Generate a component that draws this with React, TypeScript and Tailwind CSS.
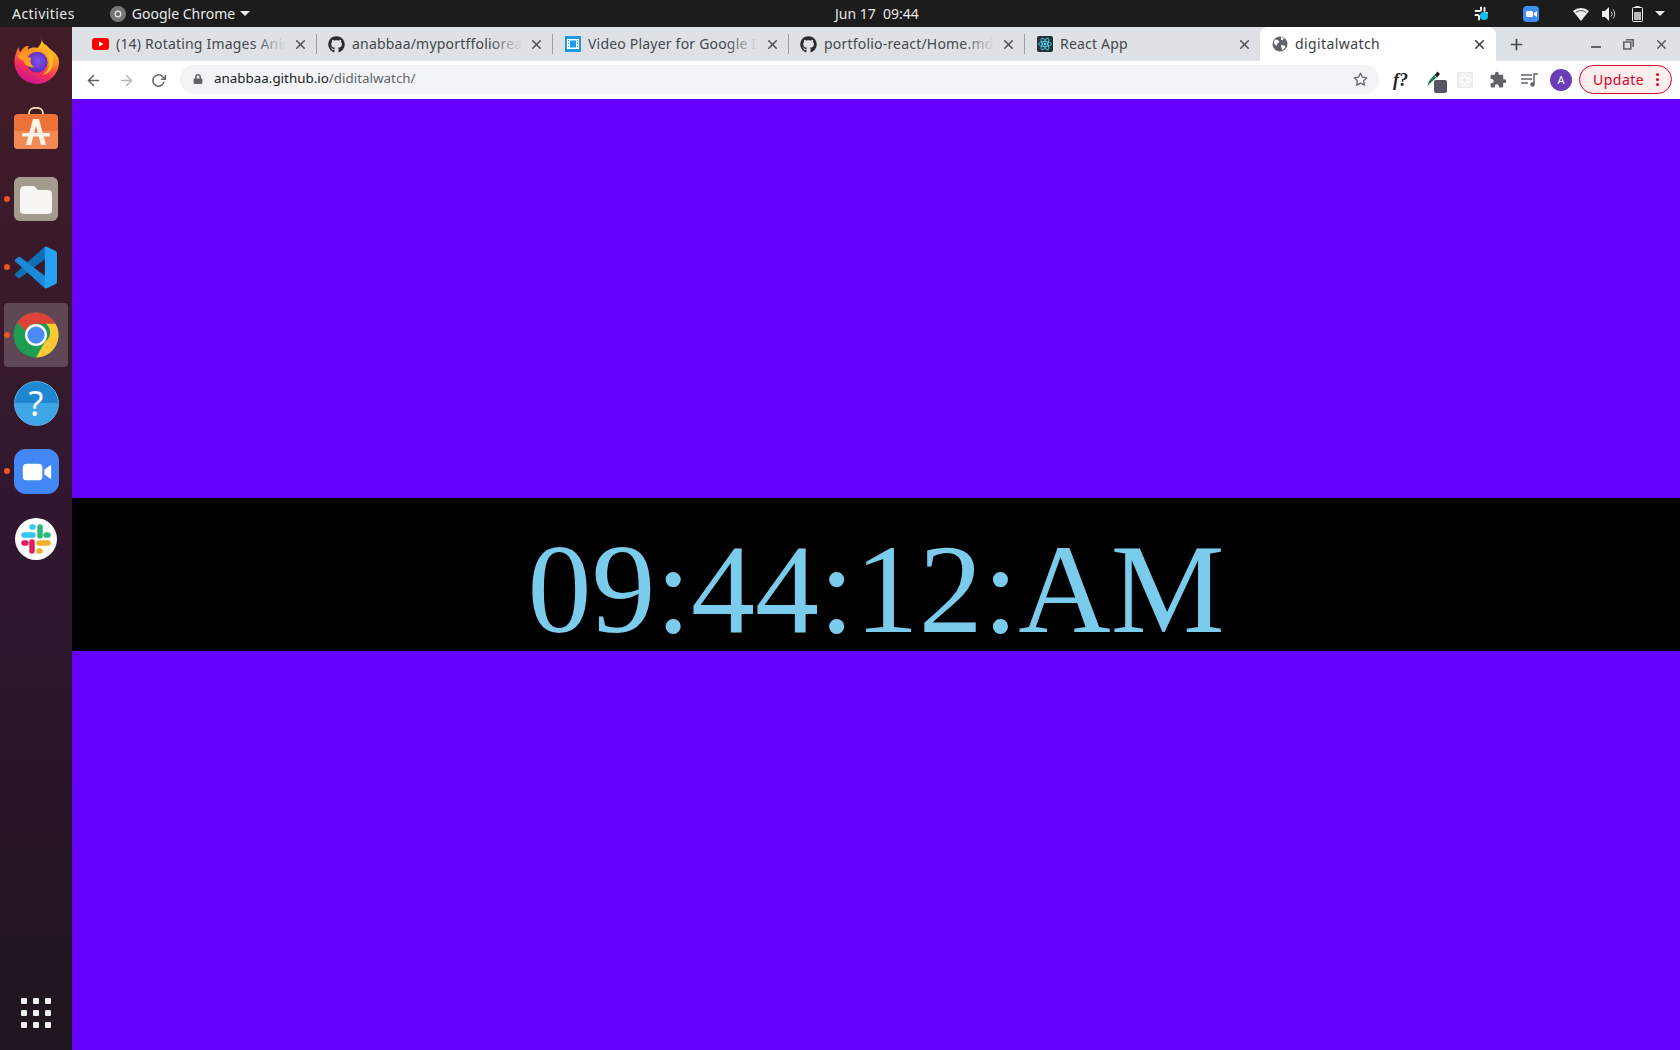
import { FunctionComponent, ReactNode } from "react";
import { FaGithub, FaLock } from "react-icons/fa";
import { MdExtension } from "react-icons/md";
import { FiArrowLeft, FiArrowRight, FiRotateCw, FiStar, FiX, FiPlus } from "react-icons/fi";

const sans = "font-['Noto_Sans',sans-serif]";

const YoutubeIcon = () => (
  <svg width="17" height="12" viewBox="0 0 17 12">
    <rect width="17" height="12" rx="3" fill="#f00" />
    <path d="M7 3.3v5.4L11.4 6z" fill="#fff" />
  </svg>
);

const VideoIcon = () => (
  <svg width="16" height="16" viewBox="0 0 16 16">
    <rect width="16" height="16" fill="#1e9be8" />
    <rect x="2" y="3" width="12" height="10" fill="#fff" />
    <rect x="5" y="4.5" width="6" height="7" fill="#1e9be8" />
    <path d="M3 4h1v1H3zM3 7h1v1H3zM3 10h1v1H3zM12 4h1v1h-1zM12 7h1v1h-1zM12 10h1v1h-1z" fill="#1e9be8" />
  </svg>
);

const ReactFavicon = () => (
  <svg width="16" height="16" viewBox="0 0 16 16">
    <rect width="16" height="16" rx="2" fill="#20323a" />
    <g fill="none" stroke="#61dafb" strokeWidth="0.8">
      <ellipse cx="8" cy="8" rx="6.5" ry="2.5" />
      <ellipse cx="8" cy="8" rx="6.5" ry="2.5" transform="rotate(60 8 8)" />
      <ellipse cx="8" cy="8" rx="6.5" ry="2.5" transform="rotate(120 8 8)" />
    </g>
    <circle cx="8" cy="8" r="1.3" fill="#61dafb" />
  </svg>
);

const GlobeIcon = () => (
  <svg width="16" height="16" viewBox="0 0 16 16">
    <circle cx="8" cy="8" r="7.5" fill="#5f6368" />
    <path d="M3 3.5l3 .5 1.5 2-2 1.500-1 2.500-3-3zM9 1l3 1-1.500 2.500L9 3.500zM9 9l3.500.5 1 1.500-3 3.500-1-2.500z" fill="#fff" />
  </svg>
);

const tabs: { icon: ReactNode; title: string }[] = [
  { icon: <YoutubeIcon />, title: "(14) Rotating Images Animation" },
  { icon: <FaGithub size={17} className="text-[#2b2d30]" />, title: "anabbaa/myportffolioreact" },
  { icon: <VideoIcon />, title: "Video Player for Google Drive" },
  { icon: <FaGithub size={17} className="text-[#2b2d30]" />, title: "portfolio-react/Home.md at" },
  { icon: <ReactFavicon />, title: "React App" },
];

const Tab: FunctionComponent<{ icon: ReactNode; title: string; last: boolean }> = ({ icon, title, last }) => (
  <div className="w-[236px] h-full flex items-center pl-[11px] pr-[9px] relative">
    <div className="w-[17px] flex justify-center shrink-0">{icon}</div>
    <div className="relative ml-[7px] w-[170px] overflow-hidden whitespace-nowrap text-[14px] tracking-[0.2px] text-[#45484c] -mt-[1px]">
      {title}
      <div className="absolute right-0 top-0 bottom-0 w-8 bg-gradient-to-r from-transparent to-[#dee1e6]" />
    </div>
    <FiX size={15} strokeWidth={2.4} className="ml-auto text-[#4a4d51]" />
    {!last && <div className="absolute right-0 top-[7px] bottom-[7px] w-px bg-[#9aa0a6]" />}
  </div>
);

const DockFirefox = () => (
  <svg width="45" height="47" viewBox="0 0 134 140" className="-mt-[6px]">
    <defs>
      <linearGradient id="ffa" x1="0.75" y1="0" x2="0.3" y2="1">
        <stop offset="0" stopColor="#ffe03d" />
        <stop offset="0.35" stopColor="#ff9a1f" />
        <stop offset="0.7" stopColor="#f52e5b" />
        <stop offset="1" stopColor="#c9119c" />
      </linearGradient>
      <radialGradient id="ffb" cx="0.55" cy="0.45" r="0.6">
        <stop offset="0" stopColor="#7e57ee" />
        <stop offset="1" stopColor="#5a27b0" />
      </radialGradient>
    </defs>
    <path d="M82 0C80 18 100 30 115 42C128 52 134 62 134 75A66 66 0 0 1 1 72C1 60 6 45 13 30C14 38 17 42 20 45C24 34 33 27 44 26C42 30 41 34 42 37C50 32 60 30 70 33C80 22 85 12 82 0Z" fill="url(#ffa)" />
    <circle cx="69" cy="75" r="31" fill="url(#ffb)" />
    <path d="M10 55C25 40 45 38 58 45C50 47 42 50 38 57C42 60 48 62 52 62C46 72 50 85 62 90C42 92 30 82 28 70C20 70 14 62 10 55Z" fill="#ff9a22" />
    <path d="M92 20C112 38 122 60 116 84C112 100 100 110 84 113C100 104 106 90 104 72C102 54 98 36 92 20Z" fill="#ffb81f" />
  </svg>
);

const DockSoftware = () => (
  <svg width="44" height="42" viewBox="0 0 44 42" className="-mt-[6px]">
    <path d="M15 7V6c0-7 14-7 14 0v1" fill="none" stroke="#ffdcb8" strokeWidth="1.800" />
    <rect y="7" width="44" height="35" rx="4" fill="#ee7137" />
    <path d="M0 24h44v14a4 4 0 0 1-4 4H4a4 4 0 0 1-4-4z" fill="#f28a55" />
    <path d="M19 12h6l7 26h-5l-5-19-5 19h-5z" fill="#fff4ec" />
    <rect x="8" y="26" width="28" height="3.500" rx="1.500" fill="#fff4ec" />
  </svg>
);

const DockFiles = () => (
  <svg width="44" height="44" viewBox="0 0 44 44" className="-ml-[1px]">
    <rect width="44" height="44" rx="6" fill="#a39c8e" />
    <path d="M6 14c0-3 2-5 4-5h10l4 4h10c3 0 4 2 4 4v17c0 2-2 3-4 3H10c-2 0-4-1-4-3z" fill="#f7f5f2" />
  </svg>
);

const vscodeArm = "M96.5 10.8 75.9.9a6.2 6.2 0 0 0-7.100 1.200L1.400 63.400a4.200 4.200 0 0 0 0 6.200l5.500 5a4.200 4.200 0 0 0 5.300.200l81.200-61.600c2.700-2.100 6.600-.100 6.600 3.300v-.200a6.200 6.200 0 0 0-3.500-5.600z";

const DockVscode = () => (
  <svg width="42" height="43" viewBox="0 0 100 100">
    <path d={vscodeArm} fill="#0f6fb5" />
    <path d={vscodeArm} fill="#1a8ad8" transform="matrix(1 0 0 -1 0 100)" />
    <path d="M71 97V3c1.500-2.500 3-2.700 5-2l20.500 9.900A6.200 6.200 0 0 1 100 16.500v67a6.200 6.200 0 0 1-3.500 5.600L76 99c-2 1-4 .5-5-2z" fill="#27a0f2" />
  </svg>
);

const DockChrome = () => (
  <svg width="46" height="46" viewBox="0 0 48 48">
    <circle cx="24" cy="24" r="23.500" fill="#1e9e52" />
    <path d="M24 .5A23.500 23.500 0 0 1 44.400 12.300H24a11.700 11.700 0 0 0-11 7.700L4.500 10.800A23.500 23.500 0 0 1 24 .5z" fill="#dc4437" />
    <path d="M44.400 12.300A23.500 23.500 0 0 1 24 47.500L33.500 31a11.700 11.700 0 0 0 1-18.700z" fill="#fcc934" />
    <circle cx="24" cy="24" r="11.500" fill="#fff" />
    <circle cx="24" cy="24" r="9" fill="#4c8bf5" />
  </svg>
);

const DockHelp = () => (
  <div className="w-[45px] h-[45px] rounded-full bg-gradient-to-b from-[#1f86d2] from-50% to-[#3ea6e6] to-50% flex items-center justify-center border border-[#5fb2e6]">
    <span className="text-white text-[34px] leading-[40px] font-['Noto_Sans',sans-serif]">?</span>
  </div>
);

const DockZoom = () => (
  <svg width="45" height="45" viewBox="0 0 46 46">
    <rect width="46" height="46" rx="12" fill="#4287f5" />
    <rect x="9" y="15" width="20" height="17" rx="4" fill="#fff" />
    <path d="M31 21l7-5v15l-7-5z" fill="#fff" />
  </svg>
);

const SlackMark = () => (
  <svg width="30" height="30" viewBox="0 0 30 30">
    <g strokeLinecap="round" strokeWidth="5.500" fill="none">
      <path d="M3 11h9" stroke="#36c5f0" />
      <path d="M11 3h1" stroke="#36c5f0" />
      <path d="M19 3v9" stroke="#2eb67d" />
      <path d="M27 11h-2" stroke="#2eb67d" />
      <path d="M11 18v9" stroke="#e01e5a" />
      <path d="M3 19h2" stroke="#e01e5a" />
      <path d="M18 19h9" stroke="#ecb22e" />
      <path d="M19 27h-1" stroke="#ecb22e" />
    </g>
  </svg>
);

const DockSlack = () => (
  <div className="w-[42px] h-[42px] rounded-full bg-white flex items-center justify-center">
    <SlackMark />
  </div>
);

const dock: { icon: ReactNode; running?: boolean; active?: boolean }[] = [
  { icon: <DockFirefox /> },
  { icon: <DockSoftware /> },
  { icon: <DockFiles />, running: true },
  { icon: <DockVscode />, running: true },
  { icon: <DockChrome />, running: true, active: true },
  { icon: <DockHelp /> },
  { icon: <DockZoom />, running: true },
  { icon: <DockSlack /> },
];

const Dock = () => (
  <aside className="w-[72px] shrink-0 flex flex-col pt-[2px] pb-[3px] bg-gradient-to-b from-[#421c26] via-[#30172f] to-[#1f1520]">
    {dock.map((item, i) => (
      <div key={i} className="h-[68px] relative flex items-center justify-center">
        {item.active && <div className="absolute inset-x-[4px] inset-y-[2px] rounded-[4px] bg-white/20" />}
        {item.running && <div className="absolute left-[4px] top-1/2 -mt-[3px] w-[6px] h-[6px] rounded-full bg-[#e95420]" />}
        <div className="relative flex">{item.icon}</div>
      </div>
    ))}
    <div className="mt-auto h-[68px] flex items-center justify-center">
      <div className="grid grid-cols-3 gap-[6px]">
        {Array.from({ length: 9 }).map((_, i) => (
          <div key={i} className="w-[6px] h-[6px] rounded-[1px] bg-[#eeeeee]" />
        ))}
      </div>
    </div>
  </aside>
);

const TopBar = () => (
  <header className={`h-[27px] shrink-0 bg-[#1c1c1c] text-[#e8e8e8] text-[14px] flex items-center relative ${sans}`}>
    <span className="ml-[12px] tracking-[0.45px]">Activities</span>
    <svg className="ml-[35px]" width="16" height="16" viewBox="0 0 16 16">
      <circle cx="8" cy="8" r="8" fill="#777" />
      <circle cx="8" cy="8" r="3.500" fill="#ddd" />
      <circle cx="8" cy="8" r="2" fill="#666" />
    </svg>
    <span className="ml-[6px]">Google Chrome</span>
    <div className="ml-[5px] w-0 h-0 border-x-[5px] border-x-transparent border-t-[5px] border-t-[#e8e8e8]" />
    <span className="absolute left-[835px] top-[3px]">Jun 17&nbsp;&nbsp;09:44</span>
    <div className="ml-auto mr-[15px] flex items-center">
      <svg width="15" height="15" viewBox="0 0 15 15">
        <path d="M1.500 5h4M7 1.500v3M13 7H9.500M5 13.500V10M1.500 9h2.500M10.500 2v3" stroke="#eee" strokeWidth="2" strokeLinecap="round" />
        <circle cx="10" cy="10" r="4" fill="#08c3ee" />
      </svg>
      <svg className="ml-[34px]" width="16" height="16" viewBox="0 0 16 16">
        <rect width="16" height="16" rx="4" fill="#3f8cf5" />
        <rect x="3" y="5" width="7" height="6" rx="1.500" fill="#fff" />
        <path d="M11 7l3-2v6l-3-2z" fill="#fff" />
      </svg>
      <svg className="ml-[34px]" width="16" height="14" viewBox="0 0 16 14">
        <path d="M0 4a12 12 0 0 1 16 0L8 14z" fill="#eee" />
        <path d="M2.800 5.500a8 8 0 0 1 10.400 0" stroke="#1c1c1c" strokeWidth="0.700" fill="none" />
      </svg>
      <svg className="ml-[13px]" width="14" height="14" viewBox="0 0 14 14">
        <path d="M0 4h3l4-4v14l-4-4H0z" fill="#eee" />
        <path d="M9 4.500a3.500 3.500 0 0 1 0 5M11 2.500a6.500 6.500 0 0 1 0 9" stroke="#ccc" fill="none" />
      </svg>
      <svg className="ml-[16px]" width="11" height="16" viewBox="0 0 11 16">
        <rect x="3.500" y="0" width="4" height="2" fill="#eee" />
        <rect x="0.500" y="1.500" width="10" height="14" rx="1" fill="none" stroke="#eee" />
        <rect x="2" y="6" width="7" height="8" fill="#bbb" />
      </svg>
      <div className="ml-[12px] w-0 h-0 border-x-[5px] border-x-transparent border-t-[5px] border-t-[#e8e8e8]" />
    </div>
  </header>
);

const TabStrip = () => (
  <div className={`h-[34px] shrink-0 bg-[#dee1e6] flex pl-[9px] ${sans}`}>
    {tabs.map((t, i) => (
      <Tab key={i} icon={t.icon} title={t.title} last={i === tabs.length - 1} />
    ))}
    <div className="w-[236px] h-full bg-white rounded-t-[8px] flex items-center pl-[12px] pr-[9px] -ml-px">
      <GlobeIcon />
      <span className="ml-[7px] text-[14px] tracking-[0.4px] text-[#3c4043] -mt-[1px]">digitalwatch</span>
      <FiX size={15} strokeWidth={2.6} className="ml-auto text-[#3c4043]" />
    </div>
    <FiPlus size={17} strokeWidth={2.4} className="ml-[12px] self-center text-[#45484c]" />
    <div className="ml-auto mr-[11px] flex items-center text-[#55585c]">
      <div className="w-[10px] h-[2px] bg-[#5f6368] mt-[6px]" />
      <svg className="ml-[22px]" width="11" height="11" viewBox="0 0 11 11">
        <path d="M3 0.800h7.200V8M0.800 3h7v7h-7z" fill="none" stroke="#5f6368" strokeWidth="1.600" />
      </svg>
      <FiX size={15} strokeWidth={2.4} className="ml-[20px]" />
    </div>
  </div>
);

const Toolbar = () => (
  <div className={`h-[38px] shrink-0 bg-white flex items-center ${sans}`}>
    <FiArrowLeft size={17} strokeWidth={2.2} className="ml-[13px] shrink-0 text-[#5f6368]" />
    <FiArrowRight size={17} strokeWidth={2.2} className="ml-[16px] shrink-0 text-[#b4b7bb]" />
    <FiRotateCw size={15} strokeWidth={2.4} className="ml-[16px] shrink-0 text-[#5f6368]" />
    <div className="ml-[14px] w-[1199px] shrink-0 h-[29px] -mt-[2px] rounded-full bg-[#f1f3f4] flex items-center pl-[13px] pr-[11px]">
      <FaLock size={10} className="text-[#5f6368]" />
      <span className="ml-[11px] text-[13.4px] text-[#202124] -mt-[1px]">
        anabbaa.github.io<span className="text-[#5f6368]">/diditalwatch/</span>
      </span>
      <FiStar size={15} strokeWidth={2} className="ml-auto text-[#5f6368]" />
    </div>
    <span className="ml-[14px] w-[16px] text-[18px] leading-none italic font-bold text-[#222] whitespace-nowrap font-['Liberation_Serif',serif]">f?</span>
    <div className="relative ml-[18px] w-[13px] h-[16px] -mt-[2px]">
      <svg width="13" height="16" viewBox="0 0 13 16">
        <path d="M0.500 15l1.500-5 5-6 2.500 2.500-6 5.500z" fill="#1f7a5a" />
        <path d="M7.500 4l3-3.500 2.500 2.500-3 3.500z" fill="#222" />
      </svg>
      <div className="absolute left-[7px] top-[9px] w-[13px] h-[13px] rounded-[2px] bg-[#575561]" />
    </div>
    <svg className="ml-[17px]" width="16" height="16" viewBox="0 0 16 16">
      <rect width="16" height="16" fill="#ececec" />
      <g fill="none" stroke="#fff" strokeWidth="1">
        <ellipse cx="8" cy="8" rx="6.500" ry="2.500" />
        <ellipse cx="8" cy="8" rx="6.500" ry="2.500" transform="rotate(60 8 8)" />
        <ellipse cx="8" cy="8" rx="6.500" ry="2.500" transform="rotate(120 8 8)" />
      </g>
    </svg>
    <MdExtension size={18} className="ml-[16px] text-[#5f6368]" />
    <svg className="ml-[14px]" width="17" height="14" viewBox="0 0 17 14">
      <path d="M0 2h11M0 6h11M0 10h7" stroke="#5f6368" strokeWidth="1.500" />
      <path d="M13 11V1h4" stroke="#5f6368" strokeWidth="1.500" fill="none" />
      <circle cx="11.500" cy="11.500" r="2.200" fill="#5f6368" />
    </svg>
    <div className="ml-[12px] w-[22px] h-[22px] rounded-full bg-[#6a3db8] text-white text-[11px] flex items-center justify-center">A</div>
    <div className="ml-[7px] w-[93px] h-[29px] -mt-[2px] rounded-full border border-[#d9002a] bg-[#fdeeee] flex items-center pl-[13px] text-[14px] tracking-[0.5px] text-[#d9002a]">
      Update
      <div className="ml-auto mr-[12px] flex flex-col gap-[2px]">
        <div className="w-[3px] h-[3px] rounded-full bg-[#d9002a]" />
        <div className="w-[3px] h-[3px] rounded-full bg-[#d9002a]" />
        <div className="w-[3px] h-[3px] rounded-full bg-[#d9002a]" />
      </div>
    </div>
  </div>
);

const App: FunctionComponent = () => (
  <div className="w-[1680px] h-[1050px] flex flex-col overflow-hidden">
    <TopBar />
    <div className="flex-1 flex min-h-0">
      <Dock />
      <div className="flex-1 flex flex-col min-w-0">
        <TabStrip />
        <Toolbar />
        <main className="flex-1 bg-[#6600ff] flex items-center">
          <div className="w-full h-[153px] pt-[29px] bg-black flex items-center justify-center text-[128px] leading-none text-[#7bcbed] font-['Liberation_Serif',serif]">
            09:44:12:AM
          </div>
        </main>
      </div>
    </div>
  </div>
);

export default App;
